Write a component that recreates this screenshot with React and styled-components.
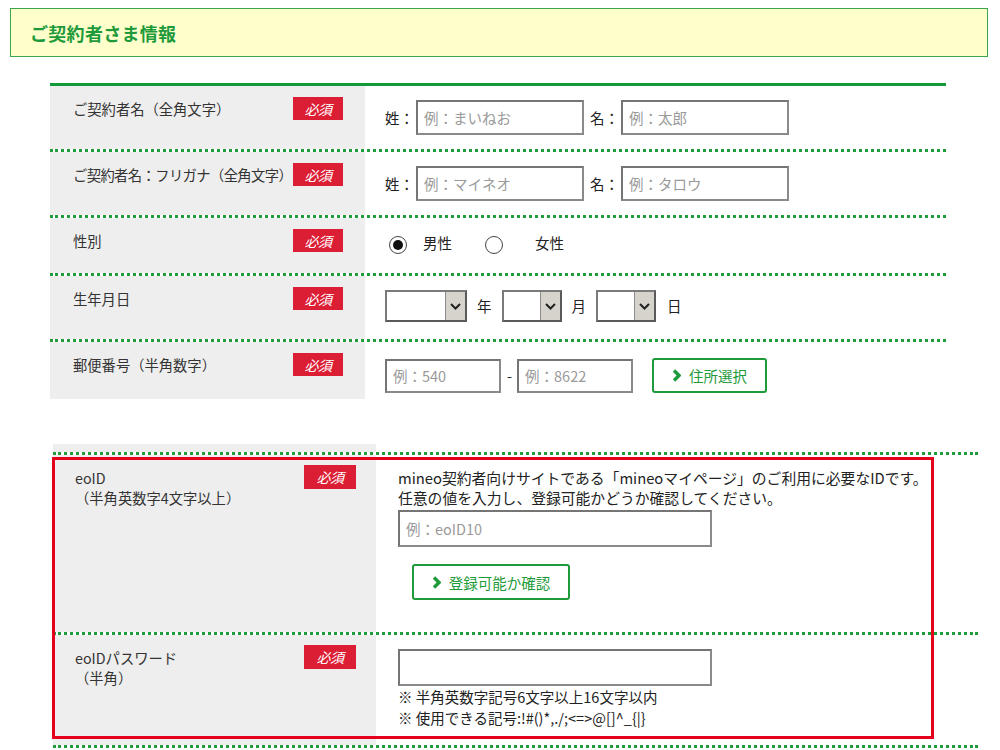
import React from "react"
import styled, { createGlobalStyle } from "styled-components"

const GlobalStyle = createGlobalStyle`
  body {
    margin: 0;
    background: #fff;
    color: #333;
    font-family: "Noto Sans CJK JP", "Noto Sans", sans-serif;
    font-size: 14px;
  }
`

const Page = styled.div`
  width: 1000px;
  padding: 8px 0 0 10px;
  box-sizing: border-box;
`

const Header = styled.div`
  width: 978px;
  height: 49px;
  box-sizing: border-box;
  border: 1px solid #3ba64a;
  background: #ffffcc;
  display: flex;
  align-items: center;
  padding-left: 19px;
`

const HeaderTitle = styled.h2`
  margin: 0;
  font-size: 18px;
  font-weight: 700;
  color: #1e9a3b;
  letter-spacing: 0.3px;
`

const Table = styled.div`
  width: ${({ width }) => width}px;
  margin: ${({ margin }) => margin};
  border-top: ${({ topline }) => (topline ? "3px solid #14993a" : "none")};
  position: relative;
`

const Row = styled.div`
  display: grid;
  grid-template-columns: ${({ labelWidth }) => labelWidth}px 1fr;
  border-bottom: ${({ last }) => (last ? "none" : "3px dotted #1f9d3d")};
`

const LabelCell = styled.div`
  background: #eeeeee;
  display: flex;
  justify-content: space-between;
  align-items: flex-start;
  padding: ${({ pad }) => pad};
`

const LabelText = styled.div`
  line-height: ${({ lh }) => lh || 20}px;
  margin-top: ${({ mt }) => mt || 0}px;
  color: #333;
  font-size: 14.3px;
  letter-spacing: ${({ tight }) => (tight ? "-0.6px" : "0")};
  white-space: nowrap;
`

const Badge = styled.span`
  width: ${({ w }) => w || 50}px;
  height: ${({ h }) => h || 23}px;
  flex: none;
  background: #dc1e35;
  color: #fff;
  font-size: 14px;
  font-style: italic;
  display: flex;
  align-items: center;
  justify-content: center;
  letter-spacing: -0.5px;
`

const FieldCell = styled.div`
  display: flex;
  align-items: ${({ column }) => (column ? "flex-start" : "center")};
  flex-direction: ${({ column }) => (column ? "column" : "row")};
  padding: ${({ pad }) => pad || "14px 20px"};
  box-sizing: border-box;
  height: ${({ h }) => (h ? `${h}px` : "auto")};
`

const FieldLabel = styled.span`
  margin: ${({ margin }) => margin || "0"};
  color: #222;
  font-size: 14.5px;
  line-height: 22px;
  white-space: nowrap;
`

const TextInput = styled.input`
  width: ${({ w }) => w}px;
  height: ${({ h }) => h || 35}px;
  box-sizing: border-box;
  border: 2px solid #8a8a8a;
  border-top-color: #757575;
  border-left-color: #757575;
  padding: 0 6px;
  font-family: inherit;
  font-size: 14.5px;
  color: #333;
  margin: ${({ margin }) => margin || "0"};
  outline: none;
  &::placeholder {
    color: #9a9a9a;
  }
`

const Radio = styled.span`
  width: 18px;
  height: 18px;
  box-sizing: border-box;
  border-radius: 50%;
  border: 1.5px solid #444;
  display: inline-flex;
  align-items: center;
  justify-content: center;
  margin: ${({ margin }) => margin || "0"};
  flex: none;
  &::after {
    content: "";
    width: 10px;
    height: 10px;
    border-radius: 50%;
    background: #111;
    display: ${({ checked }) => (checked ? "block" : "none")};
  }
`

const SelectBox = styled.div`
  width: ${({ w }) => w}px;
  height: 32px;
  box-sizing: border-box;
  border: 2px solid #7a7a7a;
  border-right-color: #5a5a5a;
  border-bottom-color: #5a5a5a;
  display: flex;
  justify-content: flex-end;
  background: #fff;
`

const SelectArrow = styled.div`
  width: 19px;
  background: #d6d3cc;
  border-left: 1px solid #8c8c8c;
  display: flex;
  align-items: center;
  justify-content: center;
`

const GreenButton = styled.button`
  width: ${({ w }) => w}px;
  height: ${({ h }) => h || 35}px;
  box-sizing: border-box;
  border: 2px solid #1e9a3b;
  border-radius: 3px;
  background: #fff;
  color: #1e9a3b;
  font-family: inherit;
  font-size: 14.5px;
  display: flex;
  align-items: center;
  justify-content: center;
  gap: 8px;
  margin: ${({ margin }) => margin || "0"};
  padding: 0;
  cursor: pointer;
`

const Description = styled.p`
  margin: 0;
  line-height: 20px;
  color: #222;
  font-size: 14.8px;
  white-space: nowrap;
`

const Note = styled.div`
  line-height: 21px;
  color: #222;
  font-size: 14.5px;
`

const Spacer = styled.div`
  height: 8px;
  background: ${({ gray }) => (gray ? "#eeeeee" : "transparent")};
`

const Highlight = styled.div`
  position: absolute;
  left: -1px;
  top: 13px;
  width: 882px;
  height: 282px;
  box-sizing: border-box;
  border: 3px solid #e5001c;
  pointer-events: none;
`

const Chevron = () => (
  <svg width="9" height="13" viewBox="0 0 9 13">
    <polyline points="2,1.5 7,6.5 2,11.5" fill="none" stroke="#1e9a3b" strokeWidth="3.4" />
  </svg>
)

const DownArrow = () => (
  <svg width="11" height="7" viewBox="0 0 11 7">
    <polyline points="1,1 5.5,5.5 10,1" fill="none" stroke="#222" strokeWidth="2" />
  </svg>
)

const Select = ({ w }) => (
  <SelectBox w={w}>
    <SelectArrow>
      <DownArrow />
    </SelectArrow>
  </SelectBox>
)

const Label = ({ children, pad = "11px 22px 0 23px", mt, tight }) => (
  <LabelCell pad={pad}>
    <LabelText lh={23} mt={mt} tight={tight}>
      {children}
    </LabelText>
    <Badge>必須</Badge>
  </LabelCell>
)

export default function App() {
  return (
    <Page>
      <GlobalStyle />
      <Header>
        <HeaderTitle>ご契約者さま情報</HeaderTitle>
      </Header>

      <Table width={896} margin="26px 0 0 40px" topline>
        <Row labelWidth={315}>
          <Label>ご契約者名（全角文字）</Label>
          <FieldCell>
            <FieldLabel>姓：</FieldLabel>
            <TextInput w={168} placeholder="例：まいねお" margin="0 0 0 2px" />
            <FieldLabel margin="0 0 0 6px">名：</FieldLabel>
            <TextInput w={168} placeholder="例：太郎" margin="0 0 0 2px" />
          </FieldCell>
        </Row>
        <Row labelWidth={315}>
          <Label tight>ご契約者名：フリガナ（全角文字）</Label>
          <FieldCell>
            <FieldLabel>姓：</FieldLabel>
            <TextInput w={168} placeholder="例：マイネオ" margin="0 0 0 2px" />
            <FieldLabel margin="0 0 0 6px">名：</FieldLabel>
            <TextInput w={168} placeholder="例：タロウ" margin="0 0 0 2px" />
          </FieldCell>
        </Row>
        <Row labelWidth={315}>
          <Label>性別</Label>
          <FieldCell pad="14px 20px 18px 24px" h={55}>
            <Radio checked margin="2px 0 0 0" />
            <FieldLabel margin="-2px 0 0 16px">男性</FieldLabel>
            <Radio margin="2px 0 0 33px" />
            <FieldLabel margin="-2px 0 0 32px">女性</FieldLabel>
          </FieldCell>
        </Row>
        <Row labelWidth={315}>
          <Label>生年月日</Label>
          <FieldCell pad="14px 20px 17px 20px">
            <Select w={82} />
            <FieldLabel margin="0 10px 0 10px">年</FieldLabel>
            <Select w={60} />
            <FieldLabel margin="0 10px 0 10px">月</FieldLabel>
            <Select w={60} />
            <FieldLabel margin="0 0 0 11px">日</FieldLabel>
          </FieldCell>
        </Row>
        <Row labelWidth={315} last>
          <Label>郵便番号（半角数字）</Label>
          <FieldCell pad="16px 20px 6px 20px">
            <TextInput w={116} h={34} placeholder="例：540" />
            <FieldLabel margin="0 0 0 6px">-</FieldLabel>
            <TextInput w={116} h={34} placeholder="例：8622" margin="0 0 0 5px" />
            <GreenButton w={115} margin="0 0 0 19px">
              <Chevron />
              住所選択
            </GreenButton>
          </FieldCell>
        </Row>
      </Table>

      <Table width={925} margin="45px 0 0 43px">
        <Row labelWidth={323}>
          <Spacer gray />
          <Spacer />
        </Row>
        <Row labelWidth={323}>
          <LabelCell pad="10px 20px 0 22px">
            <LabelText mt={3}>
              eoID
              <br />
              （半角英数字4文字以上）
            </LabelText>
            <Badge w={52} h={24}>必須</Badge>
          </LabelCell>
          <FieldCell column pad="13px 22px 32px 22px">
            <Description>
              mineo契約者向けサイトである「mineoマイページ」のご利用に必要なIDです。
              <br />
              任意の値を入力し、登録可能かどうか確認してください。
            </Description>
            <TextInput w={314} h={37} placeholder="例：eoID10" margin="2px 0 0 0" />
            <GreenButton w={158} h={36} margin="17px 0 0 14px">
              <Chevron />
              登録可能か確認
            </GreenButton>
          </FieldCell>
        </Row>
        <Row labelWidth={323}>
          <LabelCell pad="10px 20px 0 22px">
            <LabelText mt={3}>
              eoIDパスワード
              <br />
              （半角）
            </LabelText>
            <Badge w={52} h={24}>必須</Badge>
          </LabelCell>
          <FieldCell column pad="14px 22px 17px 22px">
            <TextInput w={314} h={37} type="text" />
            <Note>※ 半角英数字記号6文字以上16文字以内</Note>
            <Note>※ 使用できる記号:!#()*,./;&lt;=&gt;@[]^_{"{"}|{"}"}</Note>
          </FieldCell>
        </Row>
        <Highlight />
      </Table>
    </Page>
  )
}
